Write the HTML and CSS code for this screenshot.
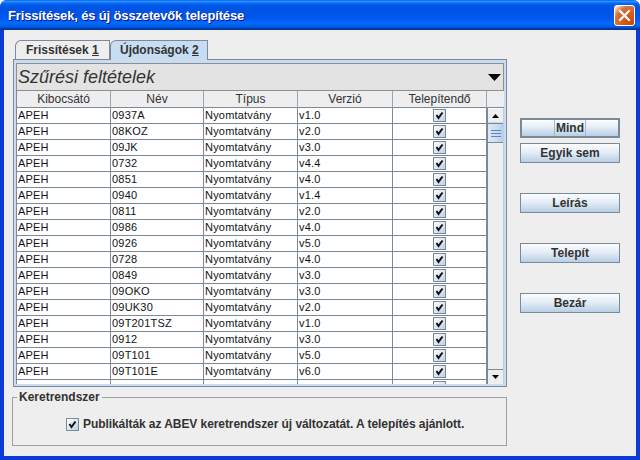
FILE: index.html
```html
<!DOCTYPE html>
<html lang="hu">
<head>
<meta charset="utf-8">
<title>Frissítések, és új összetevők telepítése</title>
<link rel="stylesheet" href="styles.css">
</head>
<body>
<div class="window">
  <div class="titlebar">
    <span class="title">Frissítések, és új összetevők telepítése</span>
    <div class="close"><svg width="13" height="13" viewBox="0 0 13 13"><path d="M2 2 L11 11 M11 2 L2 11" stroke="#fff" stroke-width="2.2" stroke-linecap="square"/></svg></div>
  </div>
  <div class="client">
    <div class="main">
      <div class="tabs">
        <div class="tab tab1">Frissítések <u>1</u></div>
        <div class="tab tab2">Újdonságok <u>2</u></div>
      </div>
      <div class="panel">
        <div class="filter">
          <span>Szűrési feltételek</span>
          <svg class="tri" width="13" height="7" viewBox="0 0 13 7"><polygon points="0,0 13,0 6.5,7" fill="#000"/></svg>
        </div>
        <div class="scrollpane">
          <div class="thead">
            <div class="th">Kibocsátó</div>
            <div class="th">Név</div>
            <div class="th">Típus</div>
            <div class="th">Verzió</div>
            <div class="th">Telepítendő</div>
          </div>
          <div class="corner"></div>
          <div class="tbody">
            <div class="tr"><div class="td">APEH</div><div class="td">0937A</div><div class="td">Nyomtatvány</div><div class="td">v1.0</div><div class="td c"><span class="cb"><svg width="11" height="11" viewBox="0 0 11 11"><path d="M2.5 5 L4.5 8 L8.5 2.5" stroke="#111" stroke-width="2" fill="none"/></svg></span></div></div>
            <div class="tr"><div class="td">APEH</div><div class="td">08KOZ</div><div class="td">Nyomtatvány</div><div class="td">v2.0</div><div class="td c"><span class="cb"><svg width="11" height="11" viewBox="0 0 11 11"><path d="M2.5 5 L4.5 8 L8.5 2.5" stroke="#111" stroke-width="2" fill="none"/></svg></span></div></div>
            <div class="tr"><div class="td">APEH</div><div class="td">09JK</div><div class="td">Nyomtatvány</div><div class="td">v3.0</div><div class="td c"><span class="cb"><svg width="11" height="11" viewBox="0 0 11 11"><path d="M2.5 5 L4.5 8 L8.5 2.5" stroke="#111" stroke-width="2" fill="none"/></svg></span></div></div>
            <div class="tr"><div class="td">APEH</div><div class="td">0732</div><div class="td">Nyomtatvány</div><div class="td">v4.4</div><div class="td c"><span class="cb"><svg width="11" height="11" viewBox="0 0 11 11"><path d="M2.5 5 L4.5 8 L8.5 2.5" stroke="#111" stroke-width="2" fill="none"/></svg></span></div></div>
            <div class="tr"><div class="td">APEH</div><div class="td">0851</div><div class="td">Nyomtatvány</div><div class="td">v4.0</div><div class="td c"><span class="cb"><svg width="11" height="11" viewBox="0 0 11 11"><path d="M2.5 5 L4.5 8 L8.5 2.5" stroke="#111" stroke-width="2" fill="none"/></svg></span></div></div>
            <div class="tr"><div class="td">APEH</div><div class="td">0940</div><div class="td">Nyomtatvány</div><div class="td">v1.4</div><div class="td c"><span class="cb"><svg width="11" height="11" viewBox="0 0 11 11"><path d="M2.5 5 L4.5 8 L8.5 2.5" stroke="#111" stroke-width="2" fill="none"/></svg></span></div></div>
            <div class="tr"><div class="td">APEH</div><div class="td">0811</div><div class="td">Nyomtatvány</div><div class="td">v2.0</div><div class="td c"><span class="cb"><svg width="11" height="11" viewBox="0 0 11 11"><path d="M2.5 5 L4.5 8 L8.5 2.5" stroke="#111" stroke-width="2" fill="none"/></svg></span></div></div>
            <div class="tr"><div class="td">APEH</div><div class="td">0986</div><div class="td">Nyomtatvány</div><div class="td">v4.0</div><div class="td c"><span class="cb"><svg width="11" height="11" viewBox="0 0 11 11"><path d="M2.5 5 L4.5 8 L8.5 2.5" stroke="#111" stroke-width="2" fill="none"/></svg></span></div></div>
            <div class="tr"><div class="td">APEH</div><div class="td">0926</div><div class="td">Nyomtatvány</div><div class="td">v5.0</div><div class="td c"><span class="cb"><svg width="11" height="11" viewBox="0 0 11 11"><path d="M2.5 5 L4.5 8 L8.5 2.5" stroke="#111" stroke-width="2" fill="none"/></svg></span></div></div>
            <div class="tr"><div class="td">APEH</div><div class="td">0728</div><div class="td">Nyomtatvány</div><div class="td">v4.0</div><div class="td c"><span class="cb"><svg width="11" height="11" viewBox="0 0 11 11"><path d="M2.5 5 L4.5 8 L8.5 2.5" stroke="#111" stroke-width="2" fill="none"/></svg></span></div></div>
            <div class="tr"><div class="td">APEH</div><div class="td">0849</div><div class="td">Nyomtatvány</div><div class="td">v3.0</div><div class="td c"><span class="cb"><svg width="11" height="11" viewBox="0 0 11 11"><path d="M2.5 5 L4.5 8 L8.5 2.5" stroke="#111" stroke-width="2" fill="none"/></svg></span></div></div>
            <div class="tr"><div class="td">APEH</div><div class="td">09OKO</div><div class="td">Nyomtatvány</div><div class="td">v3.0</div><div class="td c"><span class="cb"><svg width="11" height="11" viewBox="0 0 11 11"><path d="M2.5 5 L4.5 8 L8.5 2.5" stroke="#111" stroke-width="2" fill="none"/></svg></span></div></div>
            <div class="tr"><div class="td">APEH</div><div class="td">09UK30</div><div class="td">Nyomtatvány</div><div class="td">v2.0</div><div class="td c"><span class="cb"><svg width="11" height="11" viewBox="0 0 11 11"><path d="M2.5 5 L4.5 8 L8.5 2.5" stroke="#111" stroke-width="2" fill="none"/></svg></span></div></div>
            <div class="tr"><div class="td">APEH</div><div class="td">09T201TSZ</div><div class="td">Nyomtatvány</div><div class="td">v1.0</div><div class="td c"><span class="cb"><svg width="11" height="11" viewBox="0 0 11 11"><path d="M2.5 5 L4.5 8 L8.5 2.5" stroke="#111" stroke-width="2" fill="none"/></svg></span></div></div>
            <div class="tr"><div class="td">APEH</div><div class="td">0912</div><div class="td">Nyomtatvány</div><div class="td">v3.0</div><div class="td c"><span class="cb"><svg width="11" height="11" viewBox="0 0 11 11"><path d="M2.5 5 L4.5 8 L8.5 2.5" stroke="#111" stroke-width="2" fill="none"/></svg></span></div></div>
            <div class="tr"><div class="td">APEH</div><div class="td">09T101</div><div class="td">Nyomtatvány</div><div class="td">v5.0</div><div class="td c"><span class="cb"><svg width="11" height="11" viewBox="0 0 11 11"><path d="M2.5 5 L4.5 8 L8.5 2.5" stroke="#111" stroke-width="2" fill="none"/></svg></span></div></div>
            <div class="tr"><div class="td">APEH</div><div class="td">09T101E</div><div class="td">Nyomtatvány</div><div class="td">v6.0</div><div class="td c"><span class="cb"><svg width="11" height="11" viewBox="0 0 11 11"><path d="M2.5 5 L4.5 8 L8.5 2.5" stroke="#111" stroke-width="2" fill="none"/></svg></span></div></div>
            <div class="tr"><div class="td"></div><div class="td"></div><div class="td"></div><div class="td"></div><div class="td c"><span class="cb"></span></div></div>
          </div>
          <div class="vscroll">
            <div class="sbtn"><svg width="7" height="4" viewBox="0 0 7 4"><polygon points="3.5,0 7,4 0,4" fill="#000"/></svg></div>
            <div class="thumb"><span></span><span></span><span></span></div>
            <div class="track"></div>
            <div class="sbtn down"><svg width="7" height="4" viewBox="0 0 7 4"><polygon points="0,0 7,0 3.5,4" fill="#000"/></svg></div>
          </div>
        </div>
      </div>
      <fieldset class="frame">
        <legend>Keretrendszer</legend>
        <div class="fsrow">
          <span class="cb"><svg width="11" height="11" viewBox="0 0 11 11"><path d="M2.5 5 L4.5 8 L8.5 2.5" stroke="#111" stroke-width="2" fill="none"/></svg></span>
          <span>Publikálták az ABEV keretrendszer új változatát. A telepítés ajánlott.</span>
        </div>
      </fieldset>
    </div>
    <div class="side">
      <div class="btn default"><span class="focus">Mind</span></div>
      <div class="btn gap-s">Egyik sem</div>
      <div class="btn gap-l">Leírás</div>
      <div class="btn gap-l">Telepít</div>
      <div class="btn gap-l">Bezár</div>
    </div>
  </div>
</div>
</body>
</html>
```
FILE: styles.css
```css
* { box-sizing: border-box; }
html, body { margin: 0; padding: 0; }
body {
  width: 640px;
  height: 460px;
  overflow: hidden;
  background: #ffffff;
  font-family: "Liberation Sans", Arial, sans-serif;
}
.window {
  width: 640px;
  height: 460px;
  display: flex;
  flex-direction: column;
  background: #0b3ad6;
  border-radius: 7px 7px 0 0;
  overflow: hidden;
}
.titlebar {
  height: 30px;
  flex: none;
  display: flex;
  align-items: center;
  padding: 0 5px 0 8px;
  background: linear-gradient(to bottom, #0058ee 0%, #3593ff 4%, #288eff 6%, #127dff 8%, #036ffc 10%, #0262ee 14%, #0057e5 20%, #0054e3 24%, #0055eb 56%, #005bf5 66%, #026afe 76%, #0062ef 86%, #0052d6 92%, #0040ab 94%, #003092 100%);
}
.title {
  flex: 1;
  color: #ffffff;
  font-weight: bold;
  font-size: 13px;
  letter-spacing: -0.15px;
  text-shadow: 1px 1px #0a1883;
  padding-top: 1px;
}
.close {
  width: 21px;
  height: 21px;
  border: 1px solid #ffffff;
  border-radius: 3px;
  background: radial-gradient(circle at 90% 90%, #cc4600 0%, #dc6527 55%, #cd7546 70%, #ffccb2 90%, #ffffff 100%);
  display: flex;
  align-items: center;
  justify-content: center;
}
.client {
  flex: 1;
  margin: 0 4px 4px 4px;
  background: #eeeeee;
  display: flex;
  padding: 10px 0 0 8px;
}
.main {
  width: 495px;
  display: flex;
  flex-direction: column;
}
.tabs {
  display: flex;
  height: 19px;
  margin-left: 3px;
  align-items: flex-start;
}
.tab {
  height: 19px;
  border: 1px solid #7a8a99;
  border-bottom: none;
  border-top-left-radius: 6px;
  font-weight: bold;
  font-size: 12px;
  line-height: 18px;
  color: #333333;
  white-space: nowrap;
}
.tab u { text-decoration: underline; }
.tab1 {
  width: 95px;
  padding-left: 10px;
  background: #eeeeee;
}
.tab2 {
  width: 98px;
  height: 20px;
  padding-left: 9px;
  background: #c8ddf2;
  position: relative;
  z-index: 1;
}
.panel {
  margin-left: 1px;
  width: 494px;
  height: 328px;
  border: 1px solid #7a8a99;
  background: #c8ddf2;
  padding: 3px 2px 2px 2px;
  display: flex;
  flex-direction: column;
}
.filter {
  height: 28px;
  flex: none;
  border: 1px solid #8e8e8e;
  background: #e3e3e3;
  display: flex;
  align-items: center;
  justify-content: space-between;
  padding: 0 2px 0 1px;
  font-style: italic;
  font-size: 18px;
  color: #333333;
}
.tri { display: block; }
.scrollpane {
  flex: 1;
  display: grid;
  grid-template-columns: 471px 17px;
  grid-template-rows: 17px 1fr;
  background: #ffffff;
  overflow: hidden;
  min-height: 0;
}
.thead, .tr {
  display: grid;
  grid-template-columns: 94px 93px 94px 95px 94px;
}
.thead { border-left: 1px solid #7a8a99; }
.th {
  height: 17px;
  border-right: 1px solid #9aa6b2;
  border-bottom: 1px solid #7a8a99;
  background: #eeeeee;
  text-align: center;
  font-size: 12px;
  line-height: 17px;
  color: #333333;
  white-space: nowrap;
  overflow: hidden;
}
.corner {
  background: #eeeeee;
  border-bottom: 1px solid #7a8a99;
}
.tbody {
  overflow: hidden;
  border-left: 1px solid #7a8a99;
  min-height: 0;
}
.td {
  height: 16px;
  border-right: 1px solid #7a8a99;
  border-bottom: 1px solid #7a8a99;
  font-size: 11px;
  line-height: 15px;
  padding-left: 1px;
  white-space: nowrap;
  overflow: hidden;
  color: #111111;
  letter-spacing: 0.2px;
}
.td.c {
  display: flex;
  align-items: center;
  justify-content: center;
  padding-left: 0;
}
.cb {
  width: 13px;
  height: 13px;
  flex: none;
  border: 1px solid #7a8a99;
  background: linear-gradient(135deg, #ffffff 0%, #dde8f3 50%, #b8cfe5 100%);
  display: flex;
  align-items: center;
  justify-content: center;
}
.cb svg { display: block; }
.vscroll {
  display: flex;
  flex-direction: column;
  background: #eeeeee;
  border-left: 1px solid #7a8a99;
  border-right: 1px solid #b8cfe5;
  min-height: 0;
}
.sbtn {
  height: 15px;
  flex: none;
  display: flex;
  align-items: center;
  justify-content: center;
  background: #eeeeee;
  border-top: 1px solid #ffffff;
  border-bottom: 1px solid #d0d8e0;
}
.sbtn.down {
  border-top: 1px solid #7a8a99;
  border-bottom: none;
}
.thumb {
  height: 20px;
  flex: none;
  border-top: 1px solid #7a8a99;
  border-bottom: 1px solid #7a8a99;
  background: linear-gradient(to right, #dde8f3, #c8ddf2 60%, #b8cfe5);
  display: flex;
  flex-direction: column;
  align-items: center;
  justify-content: center;
  gap: 2px;
}
.thumb span {
  width: 10px;
  height: 1px;
  background: #6382bf;
}
.track { flex: 1; }
.frame {
  margin: 3px 0 0 0;
  padding: 0 0 0 4px;
  width: 495px;
  height: 56px;
  border: 1px solid #a0a0a0;
  min-width: 0;
}
.frame legend {
  padding: 0 2px;
  font-weight: bold;
  font-size: 12px;
  line-height: 14px;
  color: #333333;
}
.fsrow {
  display: flex;
  align-items: center;
  gap: 4px;
  padding-left: 49px;
  margin-top: 13px;
  font-weight: bold;
  font-size: 12px;
  line-height: 15px;
  color: #333333;
  white-space: nowrap;
  letter-spacing: -0.07px;
}
.side {
  width: 100px;
  margin-left: 13px;
  padding-top: 78px;
  display: flex;
  flex-direction: column;
}
.btn {
  height: 20px;
  flex: none;
  border: 1px solid #7a8a99;
  background: linear-gradient(to bottom, #fcfdfe 0%, #e4edf6 45%, #b8cfe5 100%);
  font-weight: bold;
  font-size: 12px;
  color: #333333;
  display: flex;
  align-items: center;
  justify-content: center;
}
.btn.default { border: 2px solid #7a8a99; }
.focus {
  height: 100%;
  border-left: 1px solid #a3b8cc;
  border-right: 1px solid #a3b8cc;
  display: flex;
  align-items: center;
  padding: 0 1px;
}
.gap-s { margin-top: 5px; }
.gap-l { margin-top: 30px; }
```
